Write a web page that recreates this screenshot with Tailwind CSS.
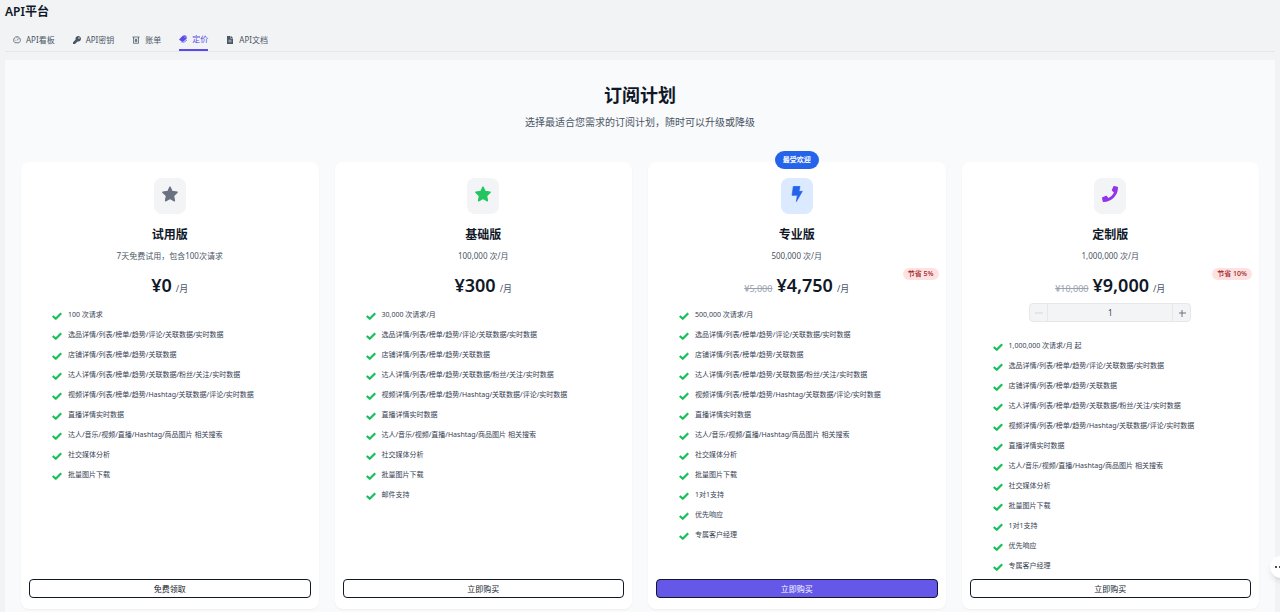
<!DOCTYPE html>
<html lang="zh-CN">
<head>
  <meta charset="UTF-8">
  <meta name="viewport" content="width=device-width, initial-scale=1.0">
  <title>API平台｜定价</title>
  <script src="https://cdn.jsdelivr.net/npm/@tailwindcss/browser@4"></script>
</head>
<body class="bg-[#f2f3f5] font-['Noto_Sans','Noto_Sans_CJK_SC',sans-serif] text-gray-900 overflow-x-hidden [scrollbar-width:none]">

  <!-- 图标 -->
  <svg class="hidden" aria-hidden="true">
    <symbol id="i-check" viewBox="0 0 20 16"><path d="M1.500 8l6 5.500L18.500 2.500" fill="none" stroke="currentColor" stroke-width="4.500" stroke-linejoin="round"/></symbol>
    <symbol id="i-star" viewBox="0 0 24 24"><path fill="currentColor" stroke="currentColor" stroke-width="2" stroke-linejoin="round" d="M12 1.500l3.200 6.800 7.600 1-5.500 5.300 1.400 7.600L12 18.500l-6.700 3.700 1.400-7.600L1.200 9.300l7.600-1z"/></symbol>
    <symbol id="i-bolt" viewBox="0 0 24 24"><path fill="currentColor" stroke="currentColor" stroke-width="1" stroke-linejoin="round" d="M6.500 .5h10l-1.500 7.500h5L11 23.500l1.500-9.500H4.500z"/></symbol>
    <symbol id="i-phone" viewBox="0 0 512 512"><path fill="currentColor" d="M493.400 24.600l-104-24c-11.300-2.600-22.900 3.300-27.500 13.900l-48 112c-4.200 9.800-1.400 21.300 6.900 28l60.600 49.600c-36 76.700-98.900 140.500-177.200 177.200l-49.600-60.600c-6.800-8.300-18.200-11.100-28-6.900l-112 48C3.900 366.500-2 378.100.6 389.400l24 104C27.100 504.200 36.700 512 48 512c256.100 0 464-207.500 464-464 0-11.200-7.700-20.900-18.600-23.400z"/></symbol>
  </svg>

  <header class="px-[5px]">
    <h1 class="text-[12px] leading-4 font-semibold pt-1">API平台</h1>
    <nav class="flex gap-[18px] px-2 mt-2 border-b border-gray-200 text-[8px] leading-3 text-gray-600">
      <a href="#" class="flex items-center gap-[5px] h-[23px]">
        <svg class="size-2" viewBox="0 0 16 16" fill="none" stroke="currentColor" stroke-width="1.5"><path d="M4 13.500a6.700 6.700 0 1 1 8 0z"/><path d="M8 9l3-4M3.500 8.500h1.500M8 3v1.500"/></svg>
        API看板
      </a>
      <a href="#" class="flex items-center gap-[5px] h-[23px]">
        <svg class="size-2" viewBox="0 0 512 512" fill="currentColor"><path d="M512 176c0 97.200-78.800 176-176 176-11.200 0-22.200-1.100-32.800-3.100l-24 27A24 24 0 0 1 261.200 384H224v40a24 24 0 0 1-24 24h-40v40a24 24 0 0 1-24 24H24a24 24 0 0 1-24-24v-78a24 24 0 0 1 7-17l161.800-161.800A176 176 0 1 1 512 176zM336 128a48 48 0 1 0 96 0 48 48 0 1 0-96 0z"/></svg>
        API密钥
      </a>
      <a href="#" class="flex items-center gap-[5px] h-[23px]">
        <svg class="size-2" viewBox="0 0 16 16" fill="none" stroke="currentColor" stroke-width="1.500"><path d="M1 2h14M3 2v12.500h10V2M5.500 5l2.500 3 2.500-3M8 8v4.500M5.500 8.500h5M5.500 10.500h5"/></svg>
        账单
      </a>
      <a href="#" class="flex items-center gap-[5px] h-[23px] -mb-px border-b-2 border-[#5b4bea] text-[#5b4bea]" aria-current="page">
        <svg class="size-2" viewBox="0 0 16 16" fill="currentColor"><path d="M0 9l7.500-7.500L12 .5l3 2 .5 4.500L8.500 13.500l-2 .5z"/><path d="M2.500 13.500l4 2L9 15l6.500-6v2L9 16H6z"/><circle cx="12" cy="4" r="1" fill="#f2f3f5"/></svg>
        定价
      </a>
      <a href="#" class="flex items-center gap-[5px] h-[23px]">
        <svg class="size-2" viewBox="0 0 16 16"><path fill="currentColor" d="M2 0h7v5h5v11H2zM10 0l4 4h-4z"/><path d="M5 8.500h6M5 11.500h6" stroke="#f2f3f5" stroke-width="1.200"/></svg>
        API文档
      </a>
    </nav>
  </header>

  <main class="mx-[5px] mt-2 px-4 pb-6 bg-[#f9fafc]">
    <div class="text-center pt-[23px]">
      <h2 class="text-[18px] leading-6 font-bold">订阅计划</h2>
      <p class="mt-[7px] text-[10px] leading-4 text-gray-600">选择最适合您需求的订阅计划，随时可以升级或降级</p>
    </div>

    <div class="grid grid-cols-4 gap-4 mt-8">

      <!-- 试用版 -->
      <section class="flex flex-col bg-white rounded-lg shadow-xs px-2 pt-4 pb-[11px]">
        <div class="flex flex-col items-center">
          <div class="w-8 h-9 rounded-lg bg-gray-100 flex justify-center pt-2 text-gray-500"><svg class="size-4"><use href="#i-star"/></svg></div>
          <h3 class="mt-[13px] text-[12px] leading-4 font-bold">试用版</h3>
          <p class="mt-[7px] text-[8px] leading-3 text-gray-600">7天免费试用，包含100次请求</p>
          <p class="mt-[11px] flex items-baseline gap-1 leading-6"><span class="text-[18px] font-semibold">¥0</span><span class="text-[9px] text-gray-600">/月</span></p>
        </div>
        <ul data-plan="trial" class="mt-1 px-[23px] text-[7px] leading-5 text-gray-700"></ul>
        <button class="mt-auto h-[19px] rounded border border-gray-900 text-[8px] leading-3">免费领取</button>
      </section>

      <!-- 基础版 -->
      <section class="flex flex-col bg-white rounded-lg shadow-xs px-2 pt-4 pb-[11px]">
        <div class="flex flex-col items-center">
          <div class="w-8 h-9 rounded-lg bg-gray-100 flex justify-center pt-2 text-[#22c55e]"><svg class="size-4"><use href="#i-star"/></svg></div>
          <h3 class="mt-[13px] text-[12px] leading-4 font-bold">基础版</h3>
          <p class="mt-[7px] text-[8px] leading-3 text-gray-600">100,000 次/月</p>
          <p class="mt-[11px] flex items-baseline gap-1 leading-6"><span class="text-[18px] font-semibold">¥300</span><span class="text-[9px] text-gray-600">/月</span></p>
        </div>
        <ul data-plan="basic" class="mt-1 px-[23px] text-[7px] leading-5 text-gray-700"></ul>
        <button class="mt-auto h-[19px] rounded border border-gray-900 text-[8px] leading-3">立即购买</button>
      </section>

      <!-- 专业版 -->
      <section class="relative flex flex-col bg-white rounded-lg shadow-xs px-2 pt-4 pb-[11px]">
        <span class="absolute -top-[11px] left-1/2 -translate-x-1/2 rounded-full bg-[#2563eb] px-2 text-[7px] leading-[18px] font-bold text-white whitespace-nowrap">最受欢迎</span>
        <span class="absolute top-[106px] right-[7px] rounded-full bg-[#fee2e2] px-[5px] text-[7px] leading-3 font-medium text-[#991b1b]">节省 5%</span>
        <div class="flex flex-col items-center">
          <div class="w-8 h-9 rounded-lg bg-blue-100 flex justify-center pt-2 text-[#2563eb]"><svg class="size-4"><use href="#i-bolt"/></svg></div>
          <h3 class="mt-[13px] text-[12px] leading-4 font-bold">专业版</h3>
          <p class="mt-[7px] text-[8px] leading-3 text-gray-600">500,000 次/月</p>
          <p class="mt-[11px] flex items-baseline gap-1 leading-6"><s class="text-[9px] text-gray-400">¥5,000</s><span class="text-[18px] font-semibold">¥4,750</span><span class="text-[9px] text-gray-600">/月</span></p>
        </div>
        <ul data-plan="pro" class="mt-1 px-[23px] text-[7px] leading-5 text-gray-700"></ul>
        <button class="mt-auto h-[19px] rounded border border-gray-900 bg-[#6558e8] text-[8px] leading-3 text-white">立即购买</button>
      </section>

      <!-- 定制版 -->
      <section class="relative flex flex-col bg-white rounded-lg shadow-xs px-2 pt-4 pb-[11px]">
        <span class="absolute top-[106px] right-[7px] rounded-full bg-[#fee2e2] px-[5px] text-[7px] leading-3 font-medium text-[#991b1b]">节省 10%</span>
        <div class="flex flex-col items-center">
          <div class="w-8 h-9 rounded-lg bg-gray-100 flex justify-center pt-2 text-[#9333ea]"><svg class="size-4"><use href="#i-phone"/></svg></div>
          <h3 class="mt-[13px] text-[12px] leading-4 font-bold">定制版</h3>
          <p class="mt-[7px] text-[8px] leading-3 text-gray-600">1,000,000 次/月</p>
          <p class="mt-[11px] flex items-baseline gap-1 leading-6"><s class="text-[9px] text-gray-400">¥10,000</s><span class="text-[18px] font-semibold">¥9,000</span><span class="text-[9px] text-gray-600">/月</span></p>
          <div class="mt-[2px] flex w-[162px] h-[19px] rounded border border-gray-200 bg-gray-100 overflow-hidden">
            <button id="minus" aria-label="减少" class="w-[17px] flex items-center justify-center text-gray-300" disabled><svg class="size-2" viewBox="0 0 8 8" stroke="currentColor"><path d="M0 4h8"/></svg></button>
            <input id="qty" aria-label="数量" value="1" class="flex-1 min-w-0 border-x border-gray-200 text-center text-[8px] text-gray-700">
            <button id="plus" aria-label="增加" class="w-[17px] flex items-center justify-center text-gray-500"><svg class="size-2" viewBox="0 0 8 8" stroke="currentColor"><path d="M1 4h7M4 1v7"/></svg></button>
          </div>
        </div>
        <ul data-plan="custom" class="mt-[14px] px-[23px] text-[7px] leading-5 text-gray-700"></ul>
        <button class="mt-[3px] h-[19px] rounded border border-gray-900 text-[8px] leading-3">立即购买</button>
      </section>
    </div>
  </main>

  <!-- 悬浮按钮 -->
  <button aria-label="更多" class="fixed -right-[12px] top-[556px] size-[22px] rounded-full bg-white shadow-md flex items-center pl-1">
    <svg class="w-3 h-1" viewBox="0 0 12 4" fill="#111"><circle cx="2" cy="2" r="1"/><circle cx="6" cy="2" r="1"/><circle cx="10" cy="2" r="1"/></svg>
  </button>

<script>
const common = [
  "选品详情/列表/榜单/趋势/评论/关联数据/实时数据",
  "店铺详情/列表/榜单/趋势/关联数据",
  "达人详情/列表/榜单/趋势/关联数据/粉丝/关注/实时数据",
  "视频详情/列表/榜单/趋势/Hashtag/关联数据/评论/实时数据",
  "直播详情实时数据",
  "达人/音乐/视频/直播/Hashtag/商品图片 相关搜索",
  "社交媒体分析",
  "批量图片下载",
];
const vip = ["1对1支持", "优先响应", "专属客户经理"];
const plans = {
  trial: ["100 次请求", ...common],
  basic: ["30,000 次请求/月", ...common, "邮件支持"],
  pro: ["500,000 次请求/月", ...common, ...vip],
  custom: ["1,000,000 次请求/月 起", ...common, ...vip],
};

document.querySelectorAll("[data-plan]").forEach(ul => {
  ul.innerHTML = plans[ul.dataset.plan].map(text => `
    <li class="flex items-center gap-[6px]">
      <svg class="w-[10px] h-2 mt-px shrink-0 text-[#16c05a]"><use href="#i-check"/></svg>
      <span class="whitespace-nowrap">${text}</span>
    </li>`).join("");
});

const qty = document.getElementById("qty");
const minus = document.getElementById("minus");
minus.onclick = () => { qty.value = Math.max(1, qty.value - 1); minus.disabled = qty.value <= 1; };
document.getElementById("plus").onclick = () => { qty.value = Number(qty.value) + 1; minus.disabled = false; };
</script>
</body>
</html>
